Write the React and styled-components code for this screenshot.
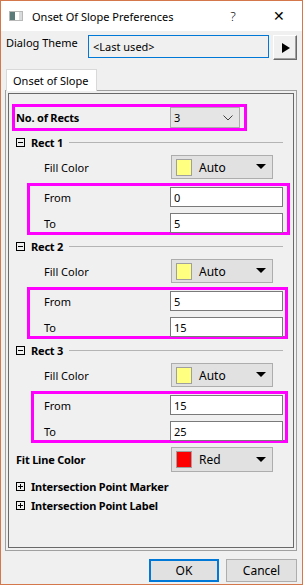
import styled, { createGlobalStyle } from "styled-components"

const Global = createGlobalStyle`
  html, body { margin: 0; padding: 0; background: #f0f0f0; }
  body { font-family: "Noto Sans", "Liberation Sans", sans-serif; font-size: 11px; color: #000; }
`

const WinIcon = () => (
  <svg width="14" height="10" viewBox="0 0 14 10">
    <rect x="0.5" y="0.5" width="13" height="9" fill="#e8e8e8" stroke="#b8b8b8" />
    <rect x="1" y="1" width="5" height="8" fill="#5b7b7a" />
    <rect x="6" y="1" width="4" height="8" fill="#ffffff" />
    <rect x="10" y="1" width="3" height="8" fill="#d8dcdc" />
  </svg>
)

const PlayIcon = () => (
  <svg width="10" height="10" viewBox="0 0 10 10">
    <path d="M1 0 L9 5 L1 10 Z" fill="#000" />
  </svg>
)

const Chevron = () => (
  <svg width="10" height="6" viewBox="0 0 10 6">
    <path d="M0.5 0.5 L5 5 L9.5 0.5" fill="none" stroke="#404040" strokeWidth="1" />
  </svg>
)

const DownTri = () => (
  <svg width="10" height="6" viewBox="0 0 10 6">
    <path d="M0 0 L10 0 L5 5 Z" fill="#000" />
  </svg>
)

const Toggle = ({ open }) => (
  <svg width="9" height="9" viewBox="0 0 9 9">
    <rect x="0.5" y="0.5" width="8" height="8" fill="none" stroke="#000" />
    <path d="M2 4.5 H7" stroke="#000" />
    {!open && <path d="M4.5 2 V7" stroke="#000" />}
  </svg>
)

const rects = [
  { name: "Rect 1", from: "0", to: "5", left: 18, right: 3 },
  { name: "Rect 2", from: "5", to: "15", left: 18, right: 5 },
  { name: "Rect 3", from: "15", to: "25", left: 22, right: 5 },
]

const App = () => {
  return <Window>
    <Global />
    <TitleBar>
      <IconSlot><WinIcon /></IconSlot>
      <Title>Onset Of Slope Preferences</Title>
      <CapButton>?</CapButton>
      <CapButton $close>✕</CapButton>
    </TitleBar>

    <Body>
      <ThemeRow>
        <ThemeLabel>Dialog Theme</ThemeLabel>
        <ThemeBox>&lt;Last used&gt;</ThemeBox>
        <ArrowButton><PlayIcon /></ArrowButton>
      </ThemeRow>

      <Tabs>
        <Tab>Onset of Slope</Tab>
      </Tabs>

      <Panel>
        <Inner>
          <Highlight $left={3} $width={235} $h={27}>
            <Row $pad={1}>
              <Label $w={154} $bold>No. of Rects</Label>
              <Combo>
                <span>3</span>
                <Chevron />
              </Combo>
            </Row>
          </Highlight>

          {rects.map((r) => (
            <Section key={r.name}>
              <GroupHeader>
                <Toggle open />
                <GroupTitle>{r.name}</GroupTitle>
                <Rule />
              </GroupHeader>
              <FieldRow $pad={35}>
                <Label $w={127}>Fill Color</Label>
                <ColorDrop>
                  <Swatch $c="#ffff80" />
                  <DropText>Auto</DropText>
                  <DownTri />
                </ColorDrop>
              </FieldRow>
              <Highlight $left={r.left} $right={r.right} $h={52} $column>
                <Row $pad={14 - (r.left - 18)} $h={20}>
                  <Label $w={126}>From</Label>
                  <Input>{r.from}</Input>
                </Row>
                <Row $pad={14 - (r.left - 18)} $h={20}>
                  <Label $w={126}>To</Label>
                  <Input>{r.to}</Input>
                </Row>
              </Highlight>
            </Section>
          ))}

          <FieldRow $pad={7} $h={25} $top={4}>
            <Label $w={155} $bold>Fit Line Color</Label>
            <ColorDrop $h={25}>
              <Swatch $c="#ff0000" />
              <DropText>Red</DropText>
              <DownTri />
            </ColorDrop>
          </FieldRow>

          <GroupHeader $top={8}>
            <Toggle />
            <GroupTitle>Intersection Point Marker</GroupTitle>
          </GroupHeader>
          <GroupHeader $top={6}>
            <Toggle />
            <GroupTitle>Intersection Point Label</GroupTitle>
          </GroupHeader>
        </Inner>
      </Panel>

      <Footer>
        <Button $default>OK</Button>
        <Button>Cancel</Button>
      </Footer>
    </Body>
  </Window>
}

export default App

const Window = styled.div`
  width: 303px;
  height: 585px;
  box-sizing: border-box;
  border: 1px solid #d4784c;
  background: #f0f0f0;
  display: flex;
  flex-direction: column;
  overflow: hidden;
`

const TitleBar = styled.div`
  height: 30px;
  background: #fff;
  display: flex;
  align-items: center;
`

const IconSlot = styled.div`
  margin-left: 8px;
  width: 14px;
  height: 10px;
  display: flex;
`

const Title = styled.div`
  margin-left: 9px;
  flex: 1;
  font-size: 11px;
`

const CapButton = styled.div`
  width: 46px;
  height: 30px;
  display: flex;
  align-items: center;
  justify-content: center;
  font-size: ${p => p.$close ? "14px" : "13px"};
  font-family: ${p => p.$close ? '"DejaVu Sans", sans-serif' : '"Noto Sans", sans-serif'};
  font-weight: 300;
`

const Body = styled.div`
  flex: 1;
  display: flex;
  flex-direction: column;
`

const ThemeRow = styled.div`
  margin-top: 4px;
  padding-left: 5px;
  display: flex;
  align-items: flex-start;
`

const ThemeLabel = styled.div`
  width: 82px;
  line-height: 16px;
`

const ThemeBox = styled.div`
  width: 181px;
  height: 23px;
  box-sizing: border-box;
  border: 1px solid #0078d7;
  padding-left: 4px;
  display: flex;
  align-items: center;
`

const ArrowButton = styled.div`
  margin-left: 4px;
  width: 24px;
  height: 25px;
  box-sizing: border-box;
  background: #f0f0f0;
  border: 1px solid;
  border-color: #fff #696969 #696969 #fff;
  box-shadow: inset -1px -1px 0 #a0a0a0;
  display: flex;
  align-items: center;
  justify-content: center;
  padding-left: 2px;
`

const Tabs = styled.div`
  margin-top: 9px;
  padding-left: 5px;
  display: flex;
  position: relative;
  z-index: 1;
  margin-bottom: -1px;
`

const Tab = styled.div`
  width: 91px;
  height: 22px;
  box-sizing: border-box;
  background: #fff;
  border: 1px solid #d9d9d9;
  border-bottom: none;
  padding-left: 6px;
  display: flex;
  align-items: center;
`

const Panel = styled.div`
  margin-left: 4px;
  width: 292px;
  height: 461px;
  box-sizing: border-box;
  border: 1px solid #a0a0a0;
  padding: 2px;
`

const Inner = styled.div`
  height: 100%;
  box-sizing: border-box;
  border: 1px solid #696969;
  display: flex;
  flex-direction: column;
`

const Highlight = styled.div`
  margin-top: ${p => p.$column ? 4 : 10}px;
  margin-left: ${p => p.$left}px;
  margin-right: ${p => p.$right ?? 0}px;
  width: ${p => p.$width ? `${p.$width}px` : "auto"};
  height: ${p => p.$h}px;
  box-sizing: border-box;
  border: 3px solid #ff00ff;
  display: flex;
  flex-direction: column;
  justify-content: ${p => p.$column ? "flex-start" : "center"};
  gap: 6px;
  padding-top: ${p => p.$column ? 1 : 0}px;
`

const Row = styled.div`
  display: flex;
  align-items: center;
  padding-left: ${p => p.$pad}px;
  height: ${p => p.$h ? `${p.$h}px` : "auto"};
`

const Label = styled.div`
  flex: 0 0 ${p => p.$w}px;
  font-weight: ${p => p.$bold ? 700 : 400};
  letter-spacing: ${p => p.$bold ? "-0.2px" : "0"};
`

const Combo = styled.div`
  width: 70px;
  height: 21px;
  box-sizing: border-box;
  background: #e5e5e5;
  border: 1px solid #acacac;
  display: flex;
  align-items: center;
  justify-content: space-between;
  padding: 0 6px 0 3px;
`

const Section = styled.div`
  display: flex;
  flex-direction: column;
`

const GroupHeader = styled.div`
  margin-top: ${p => p.$top ?? 5}px;
  height: 13px;
  padding-left: 7px;
  padding-right: 10px;
  display: flex;
  align-items: center;
`

const GroupTitle = styled.div`
  margin-left: 6px;
  font-weight: 700;
  letter-spacing: -0.2px;
`

const Rule = styled.div`
  flex: 1;
  height: 1px;
  background: #b4b4b4;
  margin-left: 6px;
`

const FieldRow = styled.div`
  margin-top: ${p => p.$top ?? 6}px;
  padding-left: ${p => p.$pad}px;
  height: ${p => p.$h ?? 24}px;
  display: flex;
  align-items: center;
`

const ColorDrop = styled.div`
  width: 102px;
  height: ${p => p.$h ?? 24}px;
  box-sizing: border-box;
  background: #e1e1e1;
  border: 1px solid #adadad;
  display: flex;
  align-items: center;
  padding: 0 6px 0 4px;
`

const Swatch = styled.div`
  width: 16px;
  height: 17px;
  box-sizing: border-box;
  background: ${p => p.$c};
  border: 1px solid #a0a0a0;
`

const DropText = styled.div`
  flex: 1;
  margin-left: 7px;
  font-size: 12px;
`

const Input = styled.div`
  width: 113px;
  height: 20px;
  box-sizing: border-box;
  background: #fff;
  border: 1px solid #7a7a7a;
  padding-left: 3px;
  display: flex;
  align-items: center;
`

const Footer = styled.div`
  margin-top: 8px;
  padding-right: 5px;
  display: flex;
  justify-content: flex-end;
  gap: 7px;
`

const Button = styled.div`
  width: ${p => p.$default ? 70 : 71}px;
  height: 23px;
  box-sizing: border-box;
  background: #e1e1e1;
  border: ${p => p.$default ? "2px solid #0078d7" : "1px solid #adadad"};
  display: flex;
  align-items: center;
  justify-content: center;
  font-size: 12px;
`
